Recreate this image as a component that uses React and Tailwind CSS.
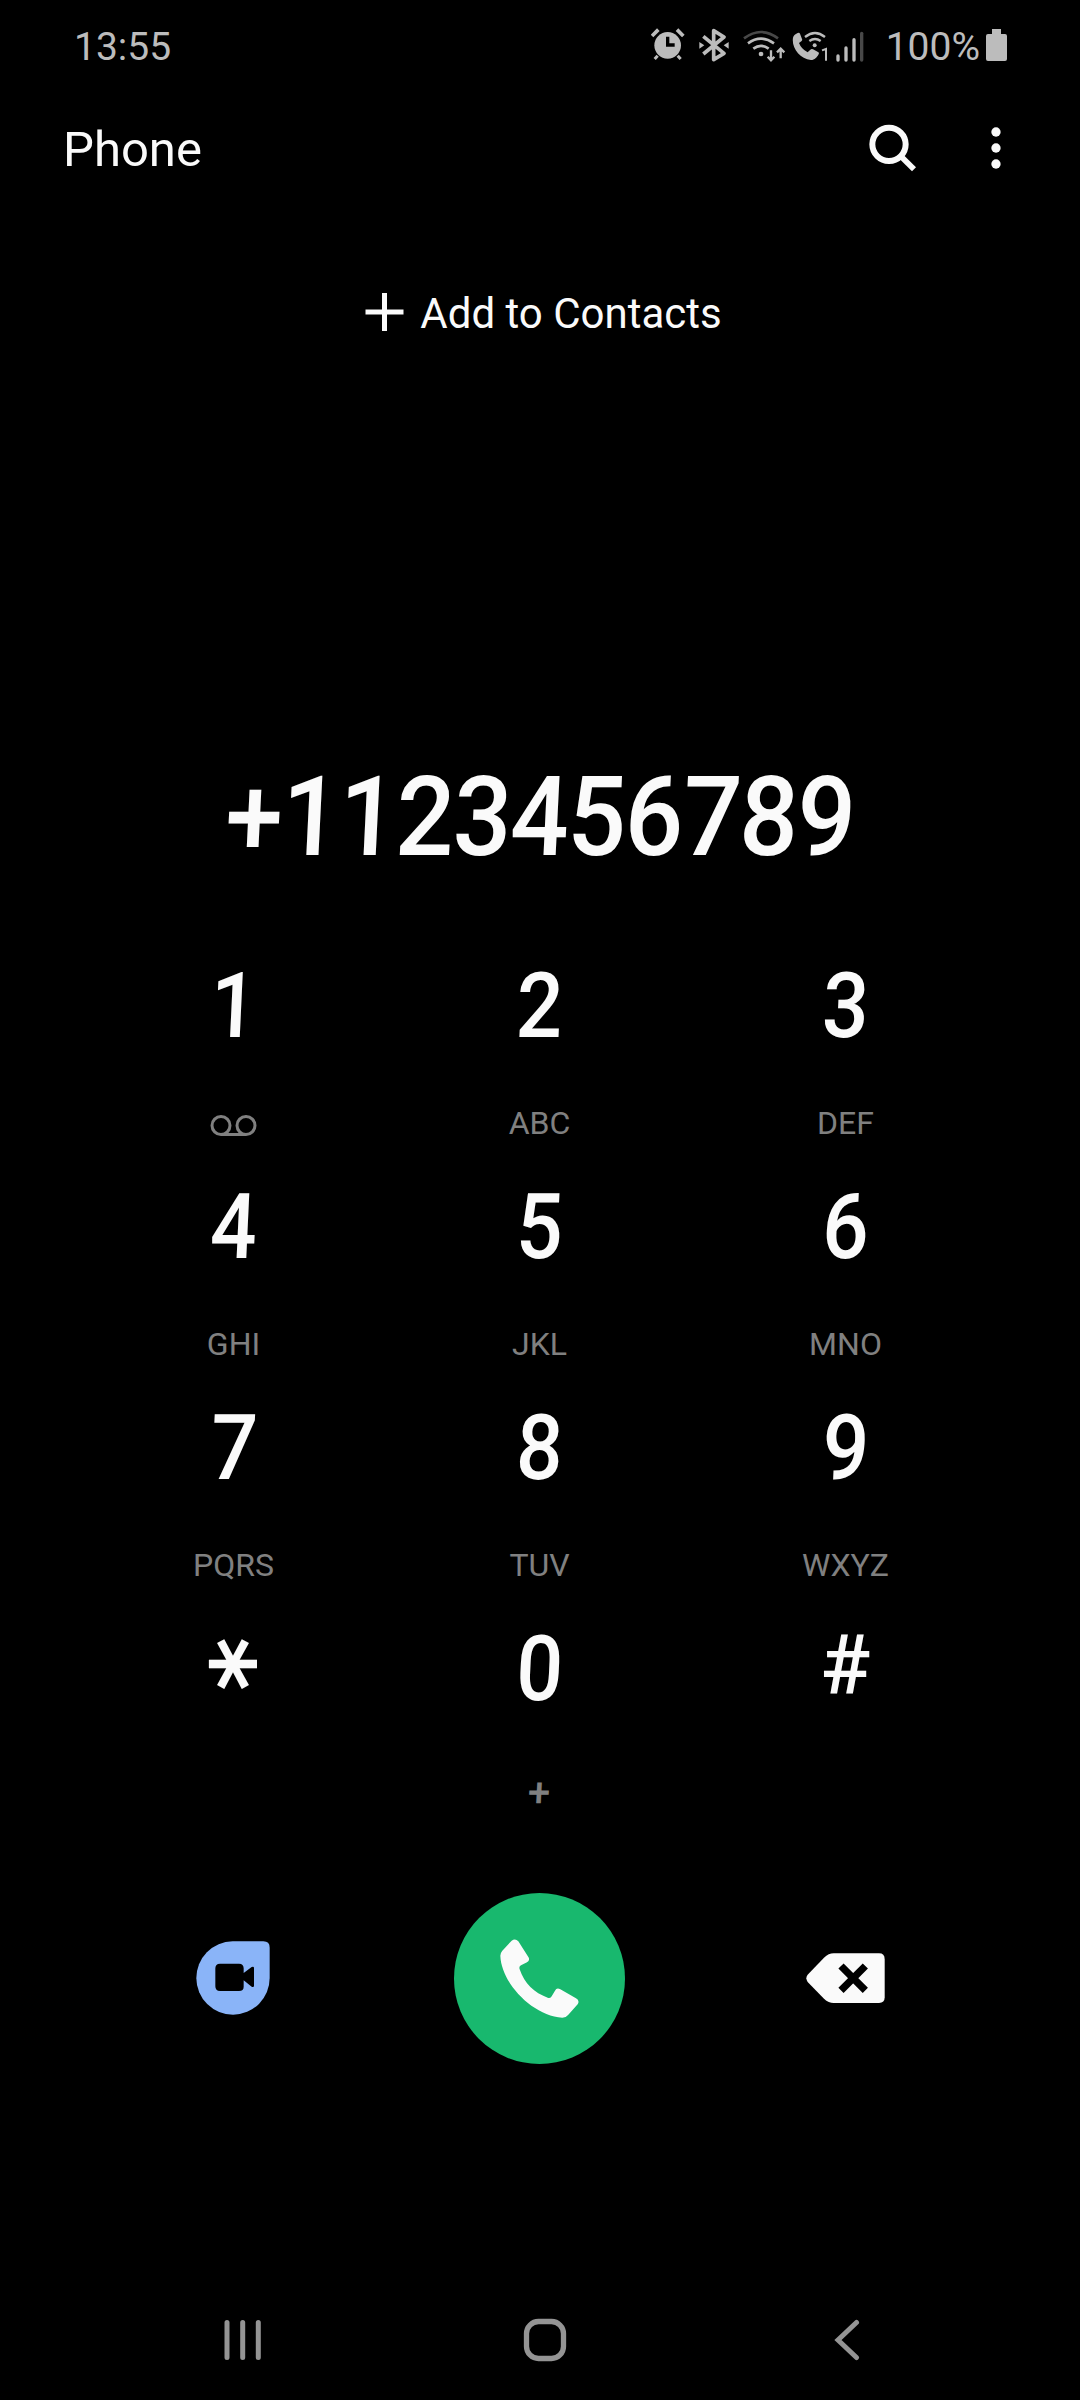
const KEYS = [
  ["1", "voicemail"],
  ["2", "ABC"],
  ["3", "DEF"],
  ["4", "GHI"],
  ["5", "JKL"],
  ["6", "MNO"],
  ["7", "PQRS"],
  ["8", "TUV"],
  ["9", "WXYZ"],
  ["*", ""],
  ["0", "+"],
  ["#", ""],
];

function StatusBar() {
  return (
    <header className="flex h-[92px] items-center pl-[74px] pr-[73px] text-[39px] leading-10 text-[#bcbcbc]">
      <span className="translate-y-px">13:55</span>
      <div className="ml-auto flex items-center">
        {/* alarm */}
        <svg className="h-8 w-[34px] -translate-y-[2px]" viewBox="61 55 102 96" fill="none" stroke="#bcbcbc">
          <circle cx="111" cy="107" r="40" fill="#bcbcbc" stroke="none" />
          <path d="M64 79l19-19M158 79l-19-19" strokeWidth="11" />
          <path d="M81 138l-9 10M141 138l9 10" strokeWidth="9" />
          <path d="M111 81v25h21" stroke="#000" strokeWidth="10" />
        </svg>
        {/* bluetooth */}
        <svg className="ml-[14px] h-[34px] w-[30px] -translate-y-[1px]" viewBox="206 52 90 102" fill="none" stroke="#bcbcbc" strokeWidth="11">
          <path d="M219 77l62 51-31 19V60l31 19-62 51" strokeLinejoin="round" />
          <path d="M207 94l15 10-15 10zM295 94l-15 10 15 10z" fill="#bcbcbc" stroke="none" />
        </svg>
        {/* wifi with traffic arrows */}
        <svg className="ml-[14px] h-[34px] w-[43px]" viewBox="337 52 129 102" fill="none" stroke="#bcbcbc" strokeWidth="8">
          <path d="M340 80q51-38 102 0" stroke="#484848" />
          <path d="M352 95q39-28 78 0M368 111q23-17 46 0" />
          <circle cx="391" cy="127" r="7" fill="#bcbcbc" stroke="none" />
          <path d="M421 116v29M411 135l10 11 10-11M450 140v-28M439 122l11-11 11 11" strokeWidth="7" />
        </svg>
        {/* wifi calling, SIM 1 */}
        <svg className="ml-[6px] h-[34px] w-[37px]" viewBox="486 52 111 102" fill="none" stroke="#bcbcbc" strokeWidth="7">
          <path d="M503 64q5-3 7 2l6 16q2 4-2 7l-7 5q7 18 26 28l8-8q4-4 8-1l15 8q5 3 1 8c-4 7-11 16-22 16-34-3-59-37-54-67q2-9 14-14z" fill="#bcbcbc" stroke="none" />
          <path d="M525 76q30-24 60 0M538 88q17-12 34 0" />
          <circle cx="554" cy="101" r="6" fill="#bcbcbc" stroke="none" />
          <path d="M576 116l12-4v35" strokeWidth="6" />
        </svg>
        {/* signal */}
        <svg className="ml-[7px] h-[34px] w-7" viewBox="620 55 84 102" fill="none" stroke="#bcbcbc" strokeWidth="10" strokeLinecap="round">
          <path d="M626 136v12M650 112v36M674 87v61" />
          <path d="M697 68v80" stroke="#484848" />
        </svg>
        <span className="ml-[22px] translate-y-px">100%</span>
        <svg className="ml-[6px] h-8 w-[21px] -translate-y-[1px]" viewBox="0 0 21 32" fill="#bcbcbc">
          <path d="M6 0h9v5h4q2 0 2 2v23q0 2-2 2H2q-2 0-2-2V7q0-2 2-2h4z" />
        </svg>
      </div>
    </header>
  );
}

function TitleBar() {
  return (
    <div className="flex h-[116px] items-center pl-[63px] pr-[74px]">
      <h1 className="text-[49px] leading-[60px]">Phone</h1>
      <svg className="ml-auto h-12 w-12 -translate-y-[2px]" viewBox="716 340 144 144" fill="none" stroke="#fafafa" strokeWidth="18">
        <circle cx="776" cy="401" r="50" />
        <path d="M813 438l38 38" strokeWidth="17" />
      </svg>
      <svg className="ml-[69px] h-12 w-5 -translate-y-[2px]" viewBox="1066 341 60 144" fill="#fafafa">
        <circle cx="1096" cy="365" r="14" />
        <circle cx="1096" cy="413" r="14" />
        <circle cx="1096" cy="461" r="14" />
      </svg>
    </div>
  );
}

function KeyLabel({ label }) {
  if (label === "voicemail") {
    return (
      <svg className="mt-[5px] h-[22px] w-[47px]" viewBox="0 0 47 22" fill="none" stroke="#808080" strokeWidth="3">
        <circle cx="11" cy="10.5" r="9" />
        <circle cx="36" cy="10.5" r="9" />
        <path d="M11 19.5h25" />
      </svg>
    );
  }
  if (label === "+") {
    return <span className="translate-y-[7px] -skew-x-3 text-[40px] font-medium leading-none">+</span>;
  }
  return label;
}

function Key({ digit, label }) {
  let shape = "-skew-x-3 scale-x-90 text-[91px] font-medium";
  if (digit === "*") shape = "-translate-y-[5px] translate-x-[16px] -rotate-90 font-['DejaVu_Sans',sans-serif] font-bold text-[103px]";
  if (digit === "#") shape = "-translate-y-[3px] text-[83px] font-medium";
  return (
    <button className="flex h-[221px] flex-col items-center">
      <span className={"flex h-[120px] items-center leading-[120px] " + shape}>{digit}</span>
      <span className="mt-[35px] flex h-11 items-center text-[32px] leading-10 text-[#808080]">
        <KeyLabel label={label} />
      </span>
    </button>
  );
}

export default function App() {
  return (
    <main className="flex h-[2400px] w-[1080px] flex-col overflow-hidden bg-black font-['Roboto',sans-serif] text-[#fafafa]">
      <StatusBar />
      <TitleBar />

      <button className="flex h-[212px] items-center justify-center gap-4 pl-[6px]">
        <svg className="h-10 w-10 -translate-y-[2px]" viewBox="0 0 40 40" stroke="#fafafa" strokeWidth="5">
          <path d="M20.500 1v38M1.500 20h38" />
        </svg>
        <span className="text-[42px] leading-[50px]">Add to Contacts</span>
      </button>

      <div className="mt-[333px] flex h-[130px] items-center justify-center -skew-x-3 scale-x-[0.93] whitespace-nowrap text-[111px] font-medium leading-[130px] tracking-[-1.500px]">
        +1123456789
      </div>

      <section className="mt-16 grid grid-cols-3 pl-[80.500px] pr-[81.500px]">
        {KEYS.map(([digit, label]) => (
          <Key key={digit} digit={digit} label={label} />
        ))}
      </section>

      <section className="mt-[48px] grid h-[200px] grid-cols-3 place-items-center pl-20 pr-[82px]">
        <svg className="h-[74px] w-[74px]" viewBox="50 214 222 222">
          <path d="M160 215h92q19 0 19 19v91a110 110 0 1 1-111-110z" fill="#8ab4f8" />
          <path d="M122 282h57q14 0 14 14v14l24-18q7-3 7 3v53q0 6-7 3l-24-19v19q0 13-14 13h-57q-14 0-14-14v-54q0-14 14-14z" fill="#000" />
        </svg>
        <span className="flex h-[171px] w-[171px] items-center justify-center rounded-full bg-[#18b86e]">
          <svg className="h-[79px] w-[79px]" viewBox="962 208 237 237" fill="#fafafa">
            <path d="M997 213q11-8 20 2l30 47q6 9-4 16l-18 9q-7 3-4 12c14 42 44 71 84 85q9 3 12-4l10-17q5-10 16-4l47 27q12 7 5 18l-28 31q-7 9-18 9C1060 438 966 341 963 258q0-8 6-15z" />
          </svg>
        </span>
        <svg className="h-[50px] w-[79px]" viewBox="79 99 237 150">
          <path d="M162 100h136q17 0 17 17v115q0 17-17 17H162q-15 0-29-13l-49-50q-8-11 0-22l49-51q14-13 29-13z" fill="#fafafa" />
          <path d="M184 138l73 73M257 138l-73 73" stroke="#000" strokeWidth="22" />
        </svg>
      </section>

      <nav className="mt-[202px] flex h-[120px] items-center pl-[223px] pr-[220px]">
        <svg className="h-[42px] w-10" viewBox="0 0 40 42" stroke="#949494" strokeWidth="5" strokeLinecap="round">
          <path d="M4 3.5v35M19.700 3.500v35M35.300 3.500v35" />
        </svg>
        <svg className="ml-[260px] h-11 w-11" viewBox="0 0 44 44" fill="none" stroke="#949494" strokeWidth="5.300">
          <rect x="3.500" y="3.500" width="37" height="37" rx="12" />
        </svg>
        <svg className="ml-auto h-[42px] w-[26px]" viewBox="0 0 26 42" fill="none" stroke="#949494" strokeWidth="5" strokeLinecap="round">
          <path d="M22.500 3.500L4 21l18.500 17.500" />
        </svg>
      </nav>
    </main>
  );
}
